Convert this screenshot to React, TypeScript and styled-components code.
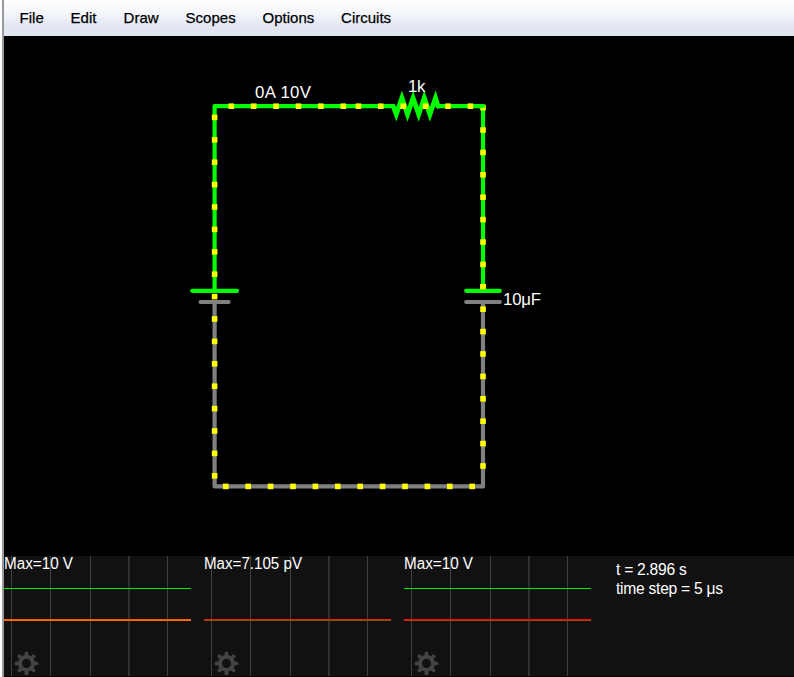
import React from "react";
import styled, { createGlobalStyle } from "styled-components";

const Global = createGlobalStyle`
  body { margin: 0; background: #fff; overflow: hidden; font-family: "Liberation Sans", Arial, sans-serif; }
`;

const Shell = styled.div`
  box-sizing: border-box;
  width: 794px;
  height: 677px;
  padding-left: 2px;
  background: #fff;
`;

const Frame = styled.div`
  display: flex;
  flex-direction: column;
  height: 677px;
  box-sizing: border-box;
  border-left: 2px solid #999;
`;

const MenuBar = styled.nav`
  display: flex;
  align-items: center;
  gap: 27px;
  height: 36px;
  box-sizing: border-box;
  padding-left: 15.6px;
  background: linear-gradient(#ffffff 0%, #f4f6fb 35%, #e1e6f1 75%, #dfe4ef 100%);
`;

const MenuItem = styled.span<{ $width: number }>`
  width: ${(p) => p.$width}px;
  color: #000;
  font-size: 15px;
  line-height: 18px;
  white-space: nowrap;
  -webkit-text-stroke: 0.25px #000;
`;

const Circuit = styled.svg`
  display: block;
  flex: 0 0 520px;
  width: 790px;
  background: #000;
`;

const Label = styled.text`
  fill: #fff;
  font: 16.8px "Liberation Sans", Arial, sans-serif;
`;

const ScopeRow = styled.section`
  display: flex;
  height: 121px;
  box-sizing: border-box;
  background: #111;
  border-bottom: 1px solid #0a0209;
`;

const ScopePlot = styled.svg`
  display: block;
  flex: 0 0 200px;
  height: 120px;
`;

const ScopeText = styled.text`
  fill: #fff;
  font: 15.6px "Liberation Sans", Arial, sans-serif;
`;

const Info = styled.div`
  padding: 4px 0 0 12px;
  color: #fff;
  font-size: 15.6px;
  line-height: 19px;
  white-space: nowrap;
`;

const InfoLine = styled.div<{ $spacing: number }>`
  letter-spacing: ${(p) => p.$spacing}px;
`;

const GREEN = "#00ff00";
const GRAY = "#808080";
const STEP = 22.4;

const menus = [
  { name: "File", width: 24 },
  { name: "Edit", width: 26 },
  { name: "Draw", width: 35 },
  { name: "Scopes", width: 50 },
  { name: "Options", width: 51.5 },
  { name: "Circuits", width: 52 },
];

type Run = { x: number; y: number; count: number; vertical?: boolean };

const Dots = ({ x, y, count, vertical }: Run) => (
  <g fill="#ffff00">
    {Array.from({ length: count }, (_, i) => (
      <rect
        key={i}
        x={x - 2.8 + (vertical ? 0 : i * STEP)}
        y={y - 2.8 + (vertical ? i * STEP : 0)}
        width={5.6}
        height={5.6}
      />
    ))}
  </g>
);

const resistorPoints = [
  [393.2, 106.2],
  ...Array.from({ length: 8 }, (_, i) => [396.3 + i * 5.6, i % 2 ? 98 : 114.4]),
  [438, 106.2],
]
  .map((p) => p.join(","))
  .join(" ");

const Schematic = () => (
  <Circuit viewBox="4 36 790 520">
    <g fill="none" strokeWidth={4.2} strokeLinecap="round">
      <path d="M214.6 302V486.4H483V302" stroke={GRAY} strokeLinejoin="round" />
      <path
        d="M214.6 290.8V106.2H393.2M438 106.2H483V290.8"
        stroke={GREEN}
        strokeLinejoin="round"
      />
      <polyline points={resistorPoints} stroke={GREEN} strokeWidth={4.8} strokeMiterlimit={10} />
    </g>
    <Dots x={231.3} y={106.2} count={6} />
    <Dots x={358.4} y={106.2} count={6} />
    <Dots x={214.6} y={117.4} count={17} vertical />
    <Dots x={225.8} y={486.4} count={12} />
    <Dots x={483} y={107.6} count={17} vertical />
    <g strokeWidth={4.2} strokeLinecap="round">
      <path d="M478 106.2H483" stroke={GREEN} />
      <path d="M192.2 290.8H237M466.2 290.8H499.8" stroke={GREEN} />
      <path d="M200.6 302H228.6M466.2 302H499.8" stroke={GRAY} />
    </g>
    <rect x={480.2} y={283.9} width={5.6} height={5.6} fill="#ffff00" />
    <Label x={255} y={98} textLength={56}>0A 10V</Label>
    <Label x={408} y={92} textLength={17.5}>1k</Label>
    <Label x={503} y={305} textLength={38}>10μF</Label>
  </Circuit>
);

const Gear = ({ x, y }: { x: number; y: number }) => (
  <g transform={`translate(${x} ${y})`} stroke="#444" fill="none">
    <circle r={6.5} strokeWidth={3.8} />
    {Array.from({ length: 8 }, (_, i) => (
      <path
        key={i}
        d="M0 -8V-10"
        strokeWidth={3.8}
        strokeLinecap="round"
        transform={`rotate(${i * 45})`}
      />
    ))}
  </g>
);

type ScopeProps = {
  label: string;
  width: number;
  voltage: boolean;
  upper: string;
  lower: string;
};

const scopes: ScopeProps[] = [
  { label: "Max=10 V", width: 69, voltage: true, upper: "#ff5a00", lower: "#ff7000" },
  { label: "Max=7.105 pV", width: 98, voltage: false, upper: "#e61e00", lower: "#965014" },
  { label: "Max=10 V", width: 69, voltage: true, upper: "#ff0000", lower: "#c83214" },
];

const Scope = ({ label, width, voltage, upper, lower }: ScopeProps) => (
  <ScopePlot viewBox="0 0 200 120">
    <g fill="#404040">
      {[7, 46, 86].map((x) => (
        <rect key={x} x={x} width={1} height={120} />
      ))}
      <rect x={124} width={2} height={120} fill="#303030" />
      <rect x={163} width={1} height={120} />
    </g>
    {voltage && <rect y={32} width={187} height={1} fill="#00f000" />}
    <rect y={63} width={187} height={1} fill={upper} />
    <rect y={64} width={187} height={1} fill={lower} />
    <ScopeText x={0} y={13} textLength={width} lengthAdjust="spacingAndGlyphs">
      {label}
    </ScopeText>
    <Gear x={22.5} y={107.4} />
  </ScopePlot>
);

export default function App() {
  return (
    <Shell>
      <Global />
      <Frame>
        <MenuBar>
          {menus.map((m) => (
            <MenuItem key={m.name} $width={m.width}>{m.name}</MenuItem>
          ))}
        </MenuBar>
        <Schematic />
        <ScopeRow>
          {scopes.map((s, i) => (
            <Scope key={i} {...s} />
          ))}
          <Info>
            <InfoLine $spacing={-0.25}>t = 2.896 s</InfoLine>
            <InfoLine $spacing={-0.25}>time step = 5 μs</InfoLine>
          </Info>
        </ScopeRow>
      </Frame>
    </Shell>
  );
}
